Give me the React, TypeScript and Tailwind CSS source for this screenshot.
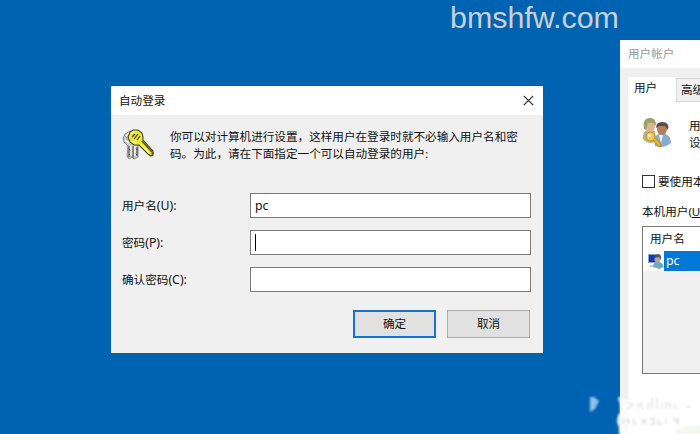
import type { ReactNode } from "react";

const DIALOG_FONT = "font-['Noto_Sans','Noto_Sans_CJK_SC',sans-serif]";

function CloseIcon() {
  return (
    <svg width="11" height="11" viewBox="0 0 11 11" fill="none" stroke="#222" strokeWidth="1.1">
      <path d="M0.8 0.8 10.2 10.2M10.2 0.8 0.8 10.2" />
    </svg>
  );
}

function KeysIcon() {
  return (
    <svg width="34" height="34" viewBox="0 0 34 34">
      {/* silver keys behind */}
      <path d="M9 3 4 6 2 10 3 14 7 18 6 28 8 31 11 29 13 31 17 29 17 18 19 14 15 7Z" fill="#c9c9c9" stroke="#8a8a8a" />
      <path d="M8 18v11M12 18v12M16 19v9M8 21l2 2M8 26l2 2M14 20l2 2M14 25l2 2" stroke="#444" strokeWidth="1" />
      <path d="M5 8l3-3M4 12l4 3M10 18v10M14 18v10" stroke="#fff" strokeWidth="1.2" />
      <path d="M4 8l2 2M5 11h2" stroke="#999" strokeWidth="1" />
      {/* gold key */}
      <path d="M9 4 12 2 17 2 21 5 22 9 22 12 32 23 32 27 30 28 27 26 21 20 18 17 13 17 9 14 7 9Z" fill="#f0e63a" stroke="#4b4819" strokeWidth="1.1" />
      <path d="M21 13 31.5 24.5V27.5" fill="none" stroke="#5b571c" strokeWidth="1.7" />
      <path d="M11 9 14 6M13 11l4-5M16 12l3-4" stroke="#3e3c18" strokeWidth="1.2" />
      <path d="M10 6 13 4M11 14l5 1M20 17l8 8" stroke="#fffa92" strokeWidth="1.2" />
    </svg>
  );
}

function UsersIcon() {
  return (
    <svg width="30" height="32" viewBox="0 0 30 32">
      <path d="M1 22Q0 14 6 13L13 14 14 25Q6 28 1 22Z" fill="#b3b883" />
      <path d="M13 29 13 20Q16 16 21 16 29 18 29 26 22 32 13 29Z" fill="#86acd0" />
      <path d="m17 18 2 8 2-8" fill="#eef5f7" />
      <ellipse cx="8" cy="9" rx="5" ry="6.5" fill="#e0b58c" />
      <path d="M2 12Q0 1 8 1q7 0 5.500 8L11 6 6 6 4 13Z" fill="#98a468" />
      <ellipse cx="20" cy="12" rx="5" ry="6" fill="#b97a58" />
      <path d="M14 11Q14 5 20 5q8 0 6 8l-3-4-6 0Z" fill="#55504f" />
      <circle cx="8.500" cy="19.500" r="4.500" fill="#f0c95a" stroke="#c18c22" />
      <path d="m11 23 6 7 2-1-1-3-4-5" fill="#e7b037" stroke="#b57d15" strokeWidth=".7" />
      <circle cx="7.500" cy="18.500" r="1.500" fill="#fff" />
    </svg>
  );
}

function AccountIcon() {
  return (
    <svg width="16" height="17" viewBox="0 0 16 17" className="shrink-0">
      <path d="M0 1h9v9H0z" fill="#8fa3c8" />
      <path d="M1 2h8v7H1z" fill="#1238b8" />
      <path d="M2 12h6v2H2z" fill="#c3cdd4" />
      <circle cx="9.500" cy="6.500" r="3" fill="#b9a496" />
      <path d="M7 5q0-4 3-4 4 0 3 6l-2-3Z" fill="#505b66" />
      <path d="M5 14q0-5 5-5t5.500 5l-4 2Z" fill="#70a6c2" />
    </svg>
  );
}

function Field({ label, hotkey, children }: { label: string; hotkey: string; children?: ReactNode }) {
  return (
    <div className="flex h-[25px] items-center">
      <div className="w-[128px] shrink-0">
        {label}
        <span className="text-[12.3px]">({hotkey}):</span>
      </div>
      <div className="flex h-[25px] w-[281px] items-center border border-[#7a7a7a] bg-white pl-1 text-[12.3px]">
        {children}
      </div>
    </div>
  );
}

function LoginDialog() {
  return (
    <section className="absolute left-[111px] top-[86px] h-[267px] w-[432px] bg-[#f0f0f0]">
      <header className="flex h-[29px] items-center justify-between bg-white pl-2 pr-[9px]">
        <h1>自动登录</h1>
        <CloseIcon />
      </header>
      <div className="flex h-[78px] pl-[10px] pt-[13px]">
        <KeysIcon />
        <p className="ml-[15px] w-[360px] whitespace-nowrap leading-[17px]">
          你可以对计算机进行设置，这样用户在登录时就不必输入用户名和密
          <br />
          码。为此，请在下面指定一个可以自动登录的用户:
        </p>
      </div>
      <div className="flex flex-col gap-3 pl-[11px]">
        <Field label="用户名" hotkey="U">
          pc
        </Field>
        <Field label="密码" hotkey="P">
          <span className="h-[17px] w-px bg-black" />
        </Field>
        <Field label="确认密码" hotkey="C" />
      </div>
      <div className="mt-[18px] flex justify-end gap-[11px] pr-[13px]">
        <button className="h-7 w-[83px] border-2 border-[#1473ce] bg-[#e1e1e1]">确定</button>
        <button className="h-7 w-[83px] border border-[#adadad] bg-[#e1e1e1]">取消</button>
      </div>
    </section>
  );
}

function AccountsWindow() {
  return (
    <section className="absolute left-[620px] top-[40px] h-[394px] w-[80px] overflow-hidden whitespace-nowrap bg-[#f0f0f0]">
      <header className="flex h-[28px] items-center bg-white pl-2 text-[#999]">用户帐户</header>
      <div className="flex h-[34px] items-end pl-2">
        <div className="h-[25px] w-[48px] shrink-0 bg-white pl-[6px] pt-[3px]">用户</div>
        <div className="h-[24px] w-[60px] shrink-0 border border-[#d9d9d9] pl-1 pt-[3px]">高级</div>
      </div>
      <div className="ml-2 h-[332px] w-[90px] bg-white pl-[14px] pt-[15px]">
        <div className="flex h-[56px]">
          <UsersIcon />
          <p className="ml-[17px] leading-[17px]">
            用<br />设
          </p>
        </div>
        <div className="flex h-[17px] items-center">
          <span className="mr-[3px] h-[13px] w-[13px] shrink-0 border border-[#333]" />
          要使用本
        </div>
        <div className="mt-[13px] h-[17px] leading-[17px]">
          本机用户(<u>U</u>):
        </div>
        <div className="mt-[6px] h-[148px] w-[80px] border border-[#777] bg-[#f0f0f0]">
          <div className="h-6 bg-white pl-[7px] leading-6">用户名</div>
          <div className="flex h-5">
            <div className="flex w-[21px] items-center bg-white pl-[5px]">
              <AccountIcon />
            </div>
            <div className="w-[60px] bg-[#0078d7] pl-[2px] text-[12.3px] leading-5 text-white">pc</div>
          </div>
        </div>
      </div>
    </section>
  );
}

// faded stamp in the bottom-right corner
function Stamp() {
  return (
    <svg className="absolute bottom-0 right-0" width="120" height="49" viewBox="0 0 120 49">
      <defs>
        <filter id="soft" x="-20%" y="-20%" width="140%" height="140%">
          <feGaussianBlur stdDeviation="0.9" />
        </filter>
      </defs>
      <g filter="url(#soft)">
        <path d="M10 12h4l5 4-4 8-5 3Z" fill="#8fc0e8" />
        <path d="M38 13l3-2v38h-2v-7l-2-5 1-7 2-2v-9Z" fill="#f4f9fd" />
        <path d="M41 14h8v40h-8z" fill="#fff" opacity=".7" />
        <path d="M48 18l5 1-5 5M57 24l3-6 3 6M68 24v-6M72 24V12M77 24V12M82 24v-6M86 24v-6l4 1v5M95 24v-5M106 22h5" stroke="#e9e9e9" strokeWidth="1.8" fill="none" />
        <path d="M43 34v5M46 35h3v4M54 34v5h3M62 34l4 5m0-5-4 5M70 34h4v5h-4M78 34v5h4M86 34v5M93 34h5v4M95 34l3 5" stroke="#dcdcdc" strokeWidth="1.3" fill="none" />
        <path d="M96 45q9-6 30-4v12H96Z" fill="#f4f8ee" />
      </g>
    </svg>
  );
}

export default function App() {
  return (
    <main className={`relative h-[434px] w-[700px] overflow-hidden bg-[#0063b1] text-[11.6px] leading-4 text-[#111] ${DIALOG_FONT}`}>
      <div className="absolute left-[450px] top-0 whitespace-nowrap font-['Liberation_Sans',Arial,sans-serif] text-[30.4px] leading-[34px] text-[#cbd0d5]">
        bmshfw.com
      </div>
      <LoginDialog />
      <AccountsWindow />
      <Stamp />
    </main>
  );
}
